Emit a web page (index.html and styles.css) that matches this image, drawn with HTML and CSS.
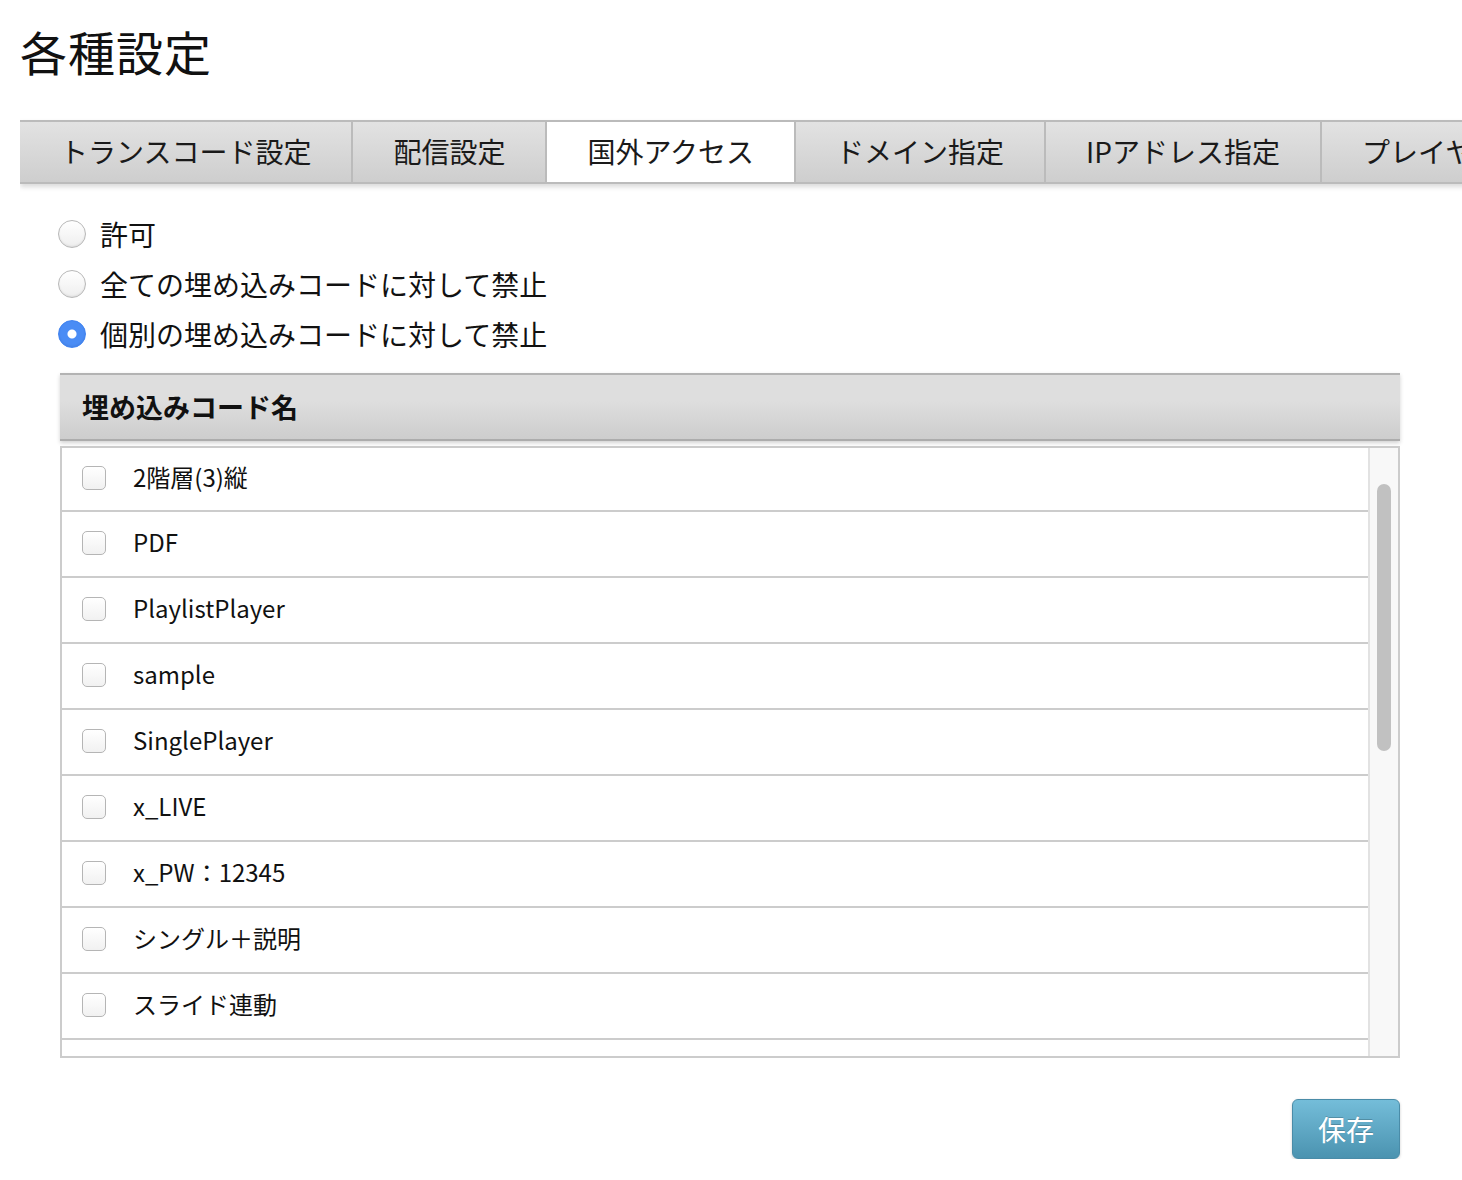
FILE: index.html
```html
<!DOCTYPE html>
<html lang="ja">
<head>
  <meta charset="UTF-8">
  <title>各種設定</title>
  <link rel="stylesheet" href="styles.css">
</head>
<body>

  <h1 class="page-title">各種設定</h1>

  <div class="tabs">
    <div class="tab">トランスコード設定</div>
    <div class="tab">配信設定</div>
    <div class="tab active">国外アクセス</div>
    <div class="tab">ドメイン指定</div>
    <div class="tab">IPアドレス指定</div>
    <div class="tab">プレイヤー設定</div>
  </div>

  <div class="content">
    <div class="radio-group">
      <label class="radio-row"><input type="radio" name="access"><span>許可</span></label>
      <label class="radio-row"><input type="radio" name="access"><span>全ての埋め込みコードに対して禁止</span></label>
      <label class="radio-row"><input type="radio" name="access" checked><span>個別の埋め込みコードに対して禁止</span></label>
    </div>

    <div class="code-table">
      <div class="code-head">埋め込みコード名</div>
      <div class="code-list">
        <div class="code-rows">
          <label class="code-row"><input type="checkbox"><span>2階層(3)縦</span></label>
          <label class="code-row"><input type="checkbox"><span>PDF</span></label>
          <label class="code-row"><input type="checkbox"><span>PlaylistPlayer</span></label>
          <label class="code-row"><input type="checkbox"><span>sample</span></label>
          <label class="code-row"><input type="checkbox"><span>SinglePlayer</span></label>
          <label class="code-row"><input type="checkbox"><span>x_LIVE</span></label>
          <label class="code-row"><input type="checkbox"><span>x_PW：12345</span></label>
          <label class="code-row"><input type="checkbox"><span>シングル＋説明</span></label>
          <label class="code-row"><input type="checkbox"><span>スライド連動</span></label>
          <label class="code-row"><input type="checkbox"></label>
        </div>
        <div class="scrollbar"><div class="thumb"></div></div>
      </div>
    </div>

    <div class="actions">
      <button class="save-btn">保存</button>
    </div>
  </div>

</body>
</html>
```

FILE: styles.css
```css
html {
  overflow-x: hidden;
}

body {
  margin: 0 0 0 20px;
  font-family: "Noto Sans CJK JP", "Liberation Sans", sans-serif;
  color: #111;
  background: #fff;
}

.page-title {
  margin: 0;
  padding-top: 21px;
  height: 120px;
  box-sizing: border-box;
  font-size: 47px;
  font-weight: normal;
  line-height: 60px;
  letter-spacing: 1px;
}

.tabs {
  display: flex;
  width: 1500px;
  height: 64px;
  box-sizing: border-box;
  border-top: 2px solid #bbb;
  border-bottom: 2px solid #bbb;
  box-shadow: 0 3px 5px rgba(0, 0, 0, 0.15);
  background: linear-gradient(#e2e2e2, #cecece);
}

.tab {
  flex: none;
  padding: 0 40px;
  border-right: 2px solid #bbb;
  font-size: 28px;
  line-height: 58px;
  color: #1a1a1a;
  white-space: nowrap;
}

.tab.active {
  background: #fff;
}

.content {
  width: 1340px;
  margin-left: 40px;
}

.radio-group {
  display: flex;
  flex-direction: column;
  gap: 6px;
  padding-top: 28px;
}

.radio-row {
  display: flex;
  align-items: center;
  height: 44px;
  font-size: 28px;
}

.radio-row input {
  appearance: none;
  width: 28px;
  height: 28px;
  margin: 0 14px 0 -2px;
  border: 1px solid #b8b8b8;
  border-radius: 50%;
  background: linear-gradient(#fff, #eee);
  box-shadow: inset 0 -1px 2px rgba(0, 0, 0, 0.08);
}

.radio-row input:checked {
  border-color: #3f82f0;
  background: radial-gradient(circle, #fff 0 4px, #4a8cf5 5px);
}

.code-table {
  margin-top: 17px;
}

.code-head {
  height: 68px;
  box-sizing: border-box;
  padding-left: 22px;
  border-top: 2px solid #b3b3b3;
  border-bottom: 2px solid #acacac;
  background: linear-gradient(#dedede 40%, #cdcdcd);
  box-shadow: 0 2px 4px rgba(0, 0, 0, 0.18);
  font-size: 27px;
  font-weight: bold;
  line-height: 64px;
}

.code-list {
  display: flex;
  height: 612px;
  margin-top: 5px;
  box-sizing: border-box;
  border: 2px solid #ccc;
  overflow: hidden;
}

.code-rows {
  flex: 1;
  overflow: hidden;
}

.code-row {
  display: flex;
  align-items: center;
  height: 66px;
  box-sizing: border-box;
  padding-bottom: 4px;
  border-bottom: 2px solid #ccc;
  font-size: 24px;
  color: #111;
}

.code-row:first-child {
  height: 64px;
}

.code-row span {
  margin-bottom: 2px;
}

.code-row input {
  appearance: none;
  flex: none;
  width: 24px;
  height: 24px;
  margin: 2px 27px 0 20px;
  border: 1px solid #b5b5b5;
  border-radius: 5px;
  background: linear-gradient(#fff, #f1f1f1);
}

.scrollbar {
  flex: none;
  width: 28px;
  border-left: 2px solid #e2e2e2;
  background: #f8f8f8;
}

.thumb {
  width: 14px;
  height: 267px;
  margin: 36px 0 0 7px;
  border-radius: 7px;
  background: #c1c1c1;
}

.actions {
  display: flex;
  justify-content: flex-end;
  margin-top: 41px;
}

.save-btn {
  width: 108px;
  height: 60px;
  border: 1px solid #4a8ca8;
  border-radius: 6px;
  background: linear-gradient(#74bdd9, #4b93b0);
  box-shadow: 0 1px 3px rgba(0, 0, 0, 0.2);
  color: #fff;
  font-family: inherit;
  font-size: 28px;
  text-shadow: 0 -1px 0 rgba(0, 0, 0, 0.2);
  cursor: pointer;
}
```
